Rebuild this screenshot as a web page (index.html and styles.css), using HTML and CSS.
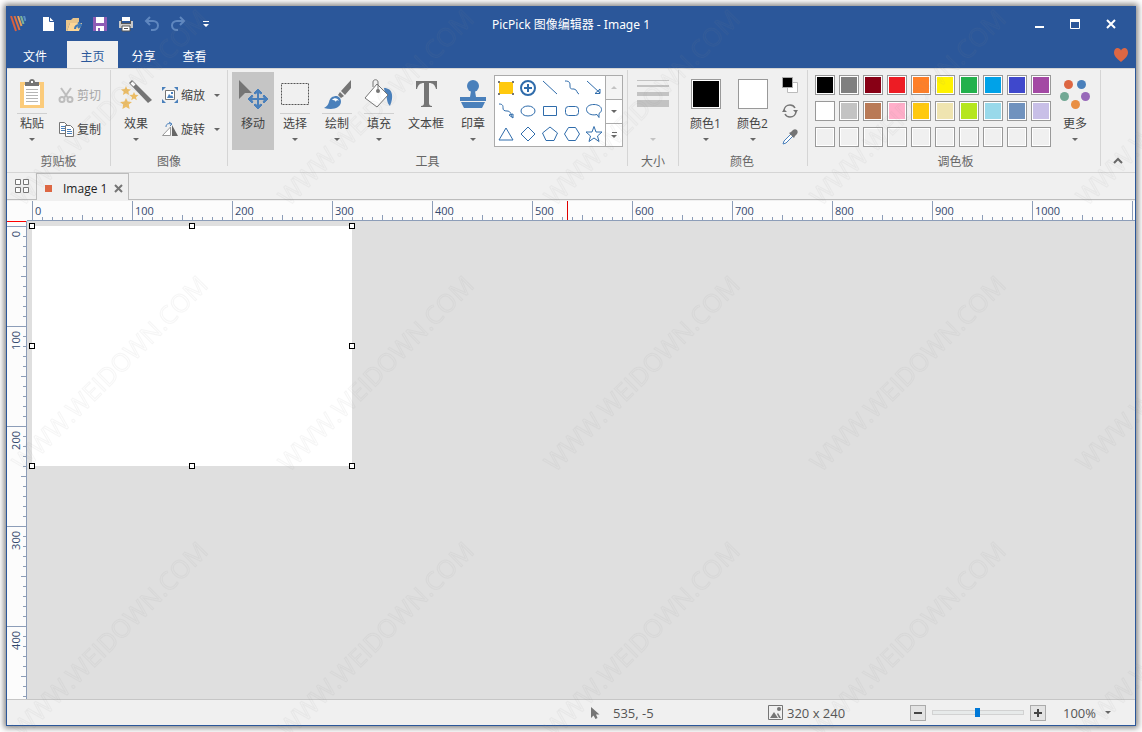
FILE: index.html
```html
<!DOCTYPE html>
<html lang="zh-CN">

<head>
    <meta charset="UTF-8" />
    <meta name="viewport" content="width=device-width, initial-scale=1.0" />
    <title>PicPick 图像编辑器 - Image 1</title>
    <link rel="stylesheet" href="styles.css">
</head>

<body>
    <div class="window">

        <!-- title bar -->
        <header class="title-bar">
            <div class="quick-access">
                <svg class="logo" width="16" height="16" viewBox="0 0 16 16" fill="none" stroke-width="2">
                    <path d="M1 0l5 15" stroke="#d9603f" />
                    <path d="M4.500 0l5 14" stroke="#e0703f" />
                    <path d="M8 0l3.500 10" stroke="#e8a05a" />
                    <path d="M11 0l2.500 8" stroke="#7bb39a" />
                    <path d="M14 0l1.500 5" stroke="#5b8fc4" />
                </svg>
                <button class="quick-btn" aria-label="新建">
                    <svg width="16" height="16" viewBox="0 0 16 16"><path d="M3 1h6.500L14 5.500V15H3z" fill="#fff" /><path d="M9.500 1v4.500H14" fill="none" stroke="#2b579a" /></svg>
                </button>
                <button class="quick-btn" aria-label="打开">
                    <svg width="16" height="16" viewBox="0 0 16 16"><path d="M0 4h5l2-2h6v5H4l-3 8H0z" fill="#e9c58b" /><path d="M4 7h12l-3 8H1z" fill="#fbd596" /><path d="M9 13c0-3 2-4 5-4M12 6.500l3 2.500-3 3" fill="none" stroke="#3d79b8" stroke-width="2" /></svg>
                </button>
                <button class="quick-btn" aria-label="保存">
                    <svg width="16" height="16" viewBox="0 0 16 16"><path d="M1 1h14v14H1z" fill="#8e5cb5" /><path d="M4 1h8v6H4zM4 10h8v5H4z" fill="#fff" /><path d="M6 12h2v3H6z" fill="#8e5cb5" /></svg>
                </button>
                <button class="quick-btn" aria-label="打印">
                    <svg width="16" height="16" viewBox="0 0 16 16"><path d="M4 1h8v4H4z" fill="#fff" /><path d="M1 5h2v2h10V5h2v7H1z" fill="#c9c9c9" /><path d="M3 4h1v3h8V4h1v4H3z" fill="#555" /><path d="M4 10h8v5H4z" fill="#fff" stroke="#555" /><path d="M6 12.500h4" stroke="#555" /></svg>
                </button>
                <button class="quick-btn" aria-label="撤消">
                    <svg width="16" height="16" viewBox="0 0 16 16" fill="none" stroke="#5f87bf" stroke-width="2"><path d="M6 1L2 5l4 4M2 5h7c3 0 5 2 5 4.500S12 14 9 14H7" /></svg>
                </button>
                <button class="quick-btn" aria-label="重做">
                    <svg width="16" height="16" viewBox="0 0 16 16" fill="none" stroke="#5f87bf" stroke-width="2"><path d="M10 1l4 4-4 4M14 5H7C4 5 2 7 2 9.500S4 14 7 14h1" /></svg>
                </button>
                <button class="quick-btn quick-more" aria-label="自定义快速访问工具栏">
                    <svg width="8" height="8" viewBox="0 0 8 8" fill="#fff"><path d="M1 1h6v1H1zM1 4h6L4 7z" /></svg>
                </button>
            </div>
            <h1 class="title">PicPick 图像编辑器 - Image 1</h1>
            <div class="window-controls">
                <button class="window-btn" aria-label="最小化">
                    <svg width="12" height="12" viewBox="0 0 12 12"><path d="M2 8h9v2H2z" fill="#fff" /></svg>
                </button>
                <button class="window-btn" aria-label="最大化">
                    <svg width="12" height="12" viewBox="0 0 12 12"><path d="M1.500 1.500h9v9h-9z" fill="none" stroke="#fff" /><path d="M1 1h10v3H1z" fill="#fff" /></svg>
                </button>
                <button class="window-btn" aria-label="关闭">
                    <svg width="12" height="12" viewBox="0 0 12 12"><path d="M2 2l8 8M10 2l-8 8" stroke="#fff" stroke-width="2" /></svg>
                </button>
            </div>
        </header>

        <!-- ribbon tabs -->
        <nav class="ribbon-tabs">
            <button class="ribbon-tab file-tab">文件</button>
            <button class="ribbon-tab active">主页</button>
            <button class="ribbon-tab">分享</button>
            <button class="ribbon-tab">查看</button>
            <button class="heart-btn" aria-label="捐助">
                <svg width="16" height="16" viewBox="0 0 16 16"><path d="M8 15C3 11 1 8.500 1 5.500 1 3 2.500 1 4.500 1 6 1 7.500 2 8 3.500 8.500 2 10 1 11.500 1 13.500 1 15 3 15 5.500c0 3-2 5.500-7 9.500z" fill="#dd6743" /></svg>
            </button>
        </nav>

        <!-- ribbon -->
        <section class="ribbon">
            <div class="group group-clipboard">
                <div class="group-body">
                    <button class="big-btn split">
                        <svg class="big-icon" width="32" height="32" viewBox="0 0 32 32"><path d="M4 3h24v26H4z" fill="#fbcb7b" /><path d="M8 6h16v20H8z" fill="#fff" /><path d="M9 7V3h4c0-4 6-4 6 0h4v4z" fill="#757575" /><path d="M15 2h2v2h-2z" fill="#fff" /><path d="M10 10.500h12M10 13.500h12M10 16.500h12M10 19.500h12M10 22.500h12" stroke="#b5b5b5" /></svg>
                        <span class="big-label">粘贴</span>
                        <span class="arrow"></span>
                    </button>
                    <div class="small-list">
                        <button class="small-btn disabled">
                            <svg width="16" height="16" viewBox="0 0 16 16" fill="none" stroke="#bdbdbd" stroke-width="2"><path d="M3 1l7 10M13 1L6 11" /><circle cx="4" cy="12.500" r="2.500" /><circle cx="12" cy="12.500" r="2.500" /></svg>
                            <span>剪切</span>
                        </button>
                        <button class="small-btn">
                            <svg width="16" height="16" viewBox="0 0 16 16"><path d="M1.500 1.500h5l3 3v8h-8z" fill="#fff" stroke="#757575" /><path d="M3 5.500h4M3 7.500h4M3 9.500h4" stroke="#4a80bb" /><path d="M7.500 4.500h5l3 3v8h-8z" fill="#fff" stroke="#757575" /><path d="M9 8.500h4M9 10.500h5M9 12.500h5" stroke="#4a80bb" /></svg>
                            <span>复制</span>
                        </button>
                    </div>
                </div>
                <div class="group-name">剪贴板</div>
            </div>

            <div class="group group-image">
                <div class="group-body">
                    <button class="big-btn">
                        <svg class="big-icon" width="32" height="32" viewBox="0 0 32 32"><path d="M9 4l3-3 20 20-4 3z" fill="#757575" /><path d="M10.500 4.500l2-2 3 3-2 2z" fill="#fff" /><path d="M6 7l1.300 3 3.700.5-2.700 2.200.8 3.300L6 14.200 2.900 16l.8-3.300L1 10.500l3.700-.5zM14 13l1.300 2.700 3.200.3-2.500 2.200.8 3-2.800-1.600-2.800 1.600.8-3-2.500-2.200 3.200-.3zM6 19l1.700 3.400 4.300.6-3.200 2.500.8 4.500L6 28l-3.600 2 .8-4.500L0 23l4.300-.6z" fill="#ecbd65" /></svg>
                        <span class="big-label">效果</span>
                        <span class="arrow"></span>
                    </button>
                    <div class="small-list">
                        <button class="small-btn">
                            <svg width="16" height="16" viewBox="0 0 16 16"><path d="M3.500 3.500h9v9h-9z" fill="#fff" stroke="#757575" /><path d="M5 11l2-4 2 2 1-1 1.500 3z" fill="#4a80bb" /><path d="M9 5h2v2H9z" fill="#4a80bb" /><path d="M0 0h4L0 4zM16 0v4l-4-4zM0 16v-4l4 4zM16 16h-4l4-4z" fill="#4a80bb" /></svg>
                            <span>缩放</span>
                            <span class="arrow"></span>
                        </button>
                        <button class="small-btn">
                            <svg width="16" height="16" viewBox="0 0 16 16"><path d="M8.500 6v8.500h-8z" fill="#fff" stroke="#999" /><path d="M10 4v11h6z" fill="#666" /><path d="M4 6c0-3 2-4 5-3M7 1l3 2-2 2" fill="none" stroke="#4a80bb" /></svg>
                            <span>旋转</span>
                            <span class="arrow"></span>
                        </button>
                    </div>
                </div>
                <div class="group-name">图像</div>
            </div>

            <div class="group group-tools">
                <div class="group-body">
                    <button class="big-btn selected">
                        <svg class="big-icon" width="32" height="32" viewBox="0 0 32 32"><path d="M2 1l13 13H8l-6 6z" fill="#757575" /><path d="M21 12v16M13 20h16" stroke="#4a80bb" stroke-width="2" /><path d="M21 10l4 4-1 1-3-2-3 2-1-1zM21 30l4-4-1-1-3 2-3-2-1 1zM11 20l4-4 1 1-2 3 2 3-1 1zM31 20l-4-4-1 1 2 3-2 3 1 1z" fill="#4a80bb" stroke="#4a80bb" /></svg>
                        <span class="big-label">移动</span>
                    </button>
                    <button class="big-btn split">
                        <svg class="big-icon" width="32" height="32" viewBox="0 0 32 32"><path d="M2.500 4.500h27v21h-27z" fill="none" stroke="#555" stroke-dasharray="2 1" /></svg>
                        <span class="big-label">选择</span>
                        <span class="arrow"></span>
                    </button>
                    <button class="big-btn split">
                        <svg class="big-icon" width="32" height="32" viewBox="0 0 32 32"><path d="M30 1v8l-6 7-4-4zM19 13l4 4-3 2-3-3z" fill="#757575" /><path d="M16 17c-5 0-7 2-8 6-1 3-2 4-5 6 8 2 16 1 17-6 0-3-1-5-4-6z" fill="#4a80bb" /><path d="M11 21c2-3 6-2 7 1-1-1-3-1-3 1-1-2-3-2-4-2z" fill="#fff" /></svg>
                        <span class="big-label">绘制</span>
                        <span class="arrow"></span>
                    </button>
                    <button class="big-btn split">
                        <svg class="big-icon" width="32" height="32" viewBox="0 0 32 32"><path d="M21 9c9 0 10 9 6 18-4-4-2-8-5-12z" fill="#4a80bb" /><path d="M14 5l11 11-11 12-12-9z" fill="#fff" stroke="#757575" /><path d="M10 8V3c0-3 5-3 5 0v9" fill="none" stroke="#757575" /><circle cx="15" cy="12" r="2" fill="#757575" /></svg>
                        <span class="big-label">填充</span>
                        <span class="arrow"></span>
                    </button>
                    <button class="big-btn wide">
                        <svg class="big-icon" width="32" height="32" viewBox="0 0 32 32"><path d="M6 2h21v8h-1c-1-4-3-6-7-6v20c0 2 1 3 3 3v1H11v-1c2 0 3-1 3-3V4c-4 0-6 2-7 6H6z" fill="#757575" /></svg>
                        <span class="big-label">文本框</span>
                    </button>
                    <button class="big-btn">
                        <svg class="big-icon" width="32" height="32" viewBox="0 0 32 32"><circle cx="16" cy="7" r="6" fill="#4a80bb" /><path d="M14 12h4l1 6h10v4H3v-4h10zM4 23h24l-3 6H7z" fill="#4a80bb" /></svg>
                        <span class="big-label">印章</span>
                        <span class="arrow"></span>
                    </button>

                    <div class="gallery">
                        <div class="shapes">
                            <button class="shape" aria-label="高亮"><svg viewBox="0 0 18 18"><path d="M2 3h14v12H2z" fill="#ffc90e" stroke="none" /><path d="M1 2h2v2H1zM15 2h2v2h-2zM1 14h2v2H1zM15 14h2v2h-2z" fill="#777" stroke="none" /></svg></button>
                            <button class="shape" aria-label="编号"><svg viewBox="0 0 18 18"><circle cx="9" cy="9" r="7" stroke-width="2" /><path d="M9 5v8M5 9h8" stroke-width="2" /></svg></button>
                            <button class="shape" aria-label="直线"><svg viewBox="0 0 18 18"><path d="M2 2l14 13" /></svg></button>
                            <button class="shape" aria-label="曲线"><svg viewBox="0 0 18 18"><path d="M2 2c5 0 5 2 5 5s1 3 4 3 3 5 5 5" /></svg></button>
                            <button class="shape" aria-label="箭头"><svg viewBox="0 0 18 18"><path d="M2 2l13 12M15 10v4.500h-5z" /></svg></button>
                            <button class="shape" aria-label="曲线箭头"><svg viewBox="0 0 18 18"><path d="M2 2c4 0 4 2 4 4s1 3 4 3 4 2 5 6M12 13l4 3v-4z" /></svg></button>
                            <button class="shape" aria-label="椭圆"><svg viewBox="0 0 18 18"><ellipse cx="9" cy="9" rx="7" ry="5" /></svg></button>
                            <button class="shape" aria-label="矩形"><svg viewBox="0 0 18 18"><path d="M2.500 4.500h13v9h-13z" /></svg></button>
                            <button class="shape" aria-label="圆角矩形"><svg viewBox="0 0 18 18"><rect x="2.500" y="4.500" width="13" height="9" rx="3" /></svg></button>
                            <button class="shape" aria-label="气泡"><svg viewBox="0 0 18 18"><path d="M12 12.500C6 14 1.500 11 1.500 7.500S5 2.500 9 2.500s7.500 2 7.500 5c0 2-1 3-2.500 4v4z" /></svg></button>
                            <button class="shape" aria-label="三角形"><svg viewBox="0 0 18 18"><path d="M9 3l7 12H2z" /></svg></button>
                            <button class="shape" aria-label="菱形"><svg viewBox="0 0 18 18"><path d="M9 2l7 7-7 7-7-7z" /></svg></button>
                            <button class="shape" aria-label="五边形"><svg viewBox="0 0 18 18"><path d="M9 2l7.500 6L13 15.500H5L1.500 8z" /></svg></button>
                            <button class="shape" aria-label="六边形"><svg viewBox="0 0 18 18"><path d="M5.500 2.500h7L16.500 9l-4 6.500h-7L1.500 9z" /></svg></button>
                            <button class="shape" aria-label="星形"><svg viewBox="0 0 18 18"><path d="M9 1.500l2 5.500h6l-4.500 4 1.500 5.500-5-3.500-5 3.500L5.500 11 1 7h6z" /></svg></button>
                        </div>
                        <div class="gallery-scroll">
                            <button aria-label="向上" class="disabled"><span class="arrow up"></span></button>
                            <button aria-label="向下"><span class="arrow"></span></button>
                            <button aria-label="更多形状"><span class="bar"></span><span class="arrow"></span></button>
                        </div>
                    </div>
                </div>
                <div class="group-name">工具</div>
            </div>

            <div class="group group-size">
                <div class="group-body">
                    <button class="big-btn disabled" aria-label="线条大小">
                        <svg class="big-icon" width="32" height="32" viewBox="0 0 32 32" fill="#c3c3c3"><path d="M0 1h32v1H0zM0 6h32v2H0zM0 13h32v4H0zM0 21h32v7H0z" /></svg>
                        <span class="big-label"></span>
                        <span class="arrow"></span>
                    </button>
                </div>
                <div class="group-name">大小</div>
            </div>

            <div class="group group-color">
                <div class="group-body">
                    <button class="big-btn color-btn">
                        <span class="color-box black"></span>
                        <span class="big-label">颜色1</span>
                        <span class="arrow"></span>
                    </button>
                    <button class="big-btn color-btn">
                        <span class="color-box"></span>
                        <span class="big-label">颜色2</span>
                        <span class="arrow"></span>
                    </button>
                    <div class="color-tools">
                        <button aria-label="默认颜色"><svg width="16" height="16" viewBox="0 0 16 16"><path d="M5.500 5.500h10v10h-10z" fill="#fff" stroke="#bbb" /><path d="M.5.500h10v10H.5z" fill="#000" stroke="#aaa" /></svg></button>
                        <button aria-label="交换颜色"><svg width="16" height="16" viewBox="0 0 16 16" fill="none" stroke="#757575" stroke-width="1.500"><path d="M2 8c0-4 3-6 6-6s4 1 5 3M14 8c0 4-3 6-6 6s-4-1-5-3" /><path d="M11 7h5l-2 3zM0 9h5L2 6z" fill="#757575" stroke="none" /></svg></button>
                        <button aria-label="取色器"><svg width="16" height="16" viewBox="0 0 16 16"><path d="M9 5l2 2-7 7-3 1 1-3z" fill="#fff" stroke="#4a80bb" /><path d="M7 4l5 5 1-2 2-2c2-3-1-6-4-4L9 3z" fill="#757575" /></svg></button>
                    </div>
                </div>
                <div class="group-name">颜色</div>
            </div>

            <div class="group group-palette">
                <div class="group-body">
                    <div class="palette" id="palette"></div>
                    <button class="big-btn">
                        <svg class="big-icon" width="32" height="32" viewBox="0 0 32 32"><circle cx="9.500" cy="5.500" r="4.500" fill="#dd6743" /><circle cx="22.500" cy="5.500" r="4.500" fill="#4a80bb" /><circle cx="5.500" cy="17.500" r="4.500" fill="#72a894" /><circle cx="26.500" cy="17.500" r="4.500" fill="#9869b9" /><circle cx="16.500" cy="25.500" r="4.500" fill="#e98f43" /></svg>
                        <span class="big-label">更多</span>
                        <span class="arrow"></span>
                    </button>
                </div>
                <div class="group-name">调色板</div>
            </div>

            <button class="collapse-btn" aria-label="折叠功能区">
                <svg width="10" height="10" viewBox="0 0 10 10" fill="none" stroke="#666" stroke-width="2"><path d="M1 7l4-4 4 4" /></svg>
            </button>
        </section>

        <!-- document tabs -->
        <nav class="doc-tabs">
            <button class="grid-btn" aria-label="缩略图">
                <svg width="14" height="14" viewBox="0 0 14 14" fill="#fff" stroke="#777"><path d="M.5.500h5v5h-5zM8.500.500h5v5h-5zM.5 8.500h5v5h-5zM8.500 8.500h5v5h-5z" /></svg>
            </button>
            <div class="doc-tab">
                <span class="doc-mark"></span>
                <span class="doc-name">Image 1</span>
                <button class="doc-close" aria-label="关闭 Image 1">
                    <svg width="9" height="9" viewBox="0 0 9 9" stroke="#757575" stroke-width="2"><path d="M1 1l7 7M8 1L1 8" /></svg>
                </button>
            </div>
        </nav>

        <!-- rulers and canvas -->
        <main class="editor">
            <div class="ruler-corner"></div>
            <div class="ruler-top" id="rulerTop">
                <span class="pointer-x"></span>
            </div>
            <div class="ruler-left" id="rulerLeft">
                <span class="pointer-y"></span>
            </div>
            <div class="workspace">
                <div class="canvas">
                    <span class="handle top left"></span>
                    <span class="handle top center"></span>
                    <span class="handle top right"></span>
                    <span class="handle middle left"></span>
                    <span class="handle middle right"></span>
                    <span class="handle bottom left"></span>
                    <span class="handle bottom center"></span>
                    <span class="handle bottom right"></span>
                </div>
            </div>
        </main>

        <!-- status bar -->
        <footer class="status-bar">
            <div class="status-item status-pos">
                <svg width="10" height="14" viewBox="0 0 10 14"><path d="M1 1v11l2.500-2.500L5.500 13l2-1L6 8.500h3.500z" fill="#757575" /></svg>
                <span>535, -5</span>
            </div>
            <div class="status-item status-size">
                <svg width="15" height="15" viewBox="0 0 15 15"><path d="M.5.500h14v14H.5z" fill="none" stroke="#757575" /><path d="M2 13l4-6 4 6zM9 9l1-1 3 5h-2z" fill="#757575" /><circle cx="11" cy="4" r="2" fill="#757575" /></svg>
                <span>320 x 240</span>
            </div>
            <div class="zoom">
                <button class="zoom-btn" aria-label="缩小"><svg width="8" height="8" viewBox="0 0 8 8"><path d="M0 3h8v2H0z" fill="#444" /></svg></button>
                <input type="range" class="zoom-range" min="0" max="100" value="49" aria-label="缩放比例" />
                <button class="zoom-btn" aria-label="放大"><svg width="8" height="8" viewBox="0 0 8 8"><path d="M0 3h3V0h2v3h3v2H5v3H3V5H0z" fill="#444" /></svg></button>
            </div>
            <label class="zoom-level">
                <select aria-label="缩放级别">
                    <option>100%</option>
                </select>
                <span class="arrow"></span>
            </label>
        </footer>
    </div>

    <svg class="watermark" aria-hidden="true">
        <defs>
            <pattern id="mark" width="266" height="266" patternUnits="userSpaceOnUse">
                <text transform="translate(23 207) rotate(-45)">WWW.WEIDOWN.COM</text>
            </pattern>
        </defs>
        <rect width="100%" height="100%" fill="url(#mark)" />
    </svg>

    <script>
        const colors = [
            '#000000', '#7f7f7f', '#880015', '#ed1c24', '#ff7f27', '#fff200', '#22b14c', '#00a2e8', '#3f48cc', '#a349a4',
            '#ffffff', '#c3c3c3', '#b97a57', '#ffaec9', '#ffc90e', '#efe4b0', '#b5e61d', '#99d9ea', '#7092be', '#c8bfe7',
            '', '', '', '', '', '', '', '', '', ''
        ];

        const palette = document.getElementById('palette');
        colors.forEach((color) => {
            const swatch = document.createElement('button');
            swatch.className = 'swatch';
            swatch.setAttribute('aria-label', color || '空');
            if (color) {
                swatch.style.backgroundColor = color;
            }
            palette.appendChild(swatch);
        });

        function buildRuler(id, length) {
            const ruler = document.getElementById(id);
            for (let value = 0; value < length; value += 100) {
                const step = document.createElement('span');
                step.className = 'ruler-step';
                // no number when it would run over the end
                if (length - value > 30) {
                    const num = document.createElement('span');
                    num.className = 'ruler-num';
                    num.textContent = value;
                    step.appendChild(num);
                }
                ruler.appendChild(step);
            }
        }

        buildRuler('rulerTop', document.getElementById('rulerTop').clientWidth - 5);
        buildRuler('rulerLeft', document.getElementById('rulerLeft').clientHeight - 5);
    </script>
</body>

</html>
```

FILE: styles.css
```css
* {
    box-sizing: border-box;
}

body {
    margin: 0;
    padding: 6px;
    height: 100vh;
    background: #fff;
    font-family: "Open Sans", "Noto Sans CJK SC", sans-serif;
    font-size: 12px;
    color: #444;
    overflow: hidden;
}

button {
    display: flex;
    align-items: center;
    justify-content: center;
    margin: 0;
    padding: 0;
    border: none;
    background: none;
    font: inherit;
    color: inherit;
}

svg {
    flex-shrink: 0;
}

.window {
    display: flex;
    flex-direction: column;
    height: 100%;
    border: 1px solid #2b579a;
    background: #f0f0f0;
    box-shadow: 0 0 6px 2px rgba(0, 0, 0, 0.5);
}

.arrow {
    width: 0;
    height: 0;
    border: 3px solid transparent;
    border-top-color: #666;
    border-bottom: none;
}

.arrow.up {
    border-top: none;
    border-bottom: 3px solid #666;
}

.disabled {
    color: #a6a6a6;
}

.disabled .arrow {
    border-top-color: #c3c3c3;
    border-bottom-color: #c3c3c3;
}

/* title bar */
.title-bar {
    display: grid;
    grid-template-columns: 1fr auto 1fr;
    align-items: center;
    flex: 0 0 34px;
    background: #2b579a;
    color: #fff;
}

.quick-access {
    display: flex;
    align-items: center;
}

.logo {
    margin: 0 9px 0 3px;
}

.quick-btn {
    width: 26px;
    height: 26px;
}

.quick-more {
    width: 30px;
}

.title {
    margin: 0;
    font-family: "Noto Sans", "Noto Sans CJK SC", sans-serif;
    font-size: 12px;
    font-weight: normal;
}

.window-controls {
    display: flex;
    justify-content: flex-end;
    padding-right: 6px;
}

.window-btn {
    width: 36px;
    height: 26px;
}

/* ribbon tabs */
.ribbon-tabs {
    display: flex;
    flex: 0 0 27px;
    background: #2b579a;
}

.ribbon-tab {
    width: 51px;
    padding-top: 3px;
    color: #fff;
}

.file-tab {
    width: 56px;
    margin-right: 4px;
}

.ribbon-tab.active {
    margin-bottom: -1px;
    padding-bottom: 1px;
    background: #f0f0f0;
    color: #2b579a;
}

.heart-btn {
    margin-left: auto;
    padding-right: 6px;
}

/* ribbon */
.ribbon {
    display: flex;
    flex: 0 0 105px;
    border-top: 1px solid #d5d5d5;
    border-bottom: 1px solid #d5d5d5;
}

.group {
    display: flex;
    flex-direction: column;
    padding: 3px 5px 0 4px;
    background: linear-gradient(#d5d5d5, #d5d5d5) right 1px / 1px 96px no-repeat;
}

.group-body {
    display: flex;
    height: 78px;
}

.group-name {
    padding-top: 2px;
    line-height: 20px;
    text-align: center;
    color: #666;
}

.group-clipboard {
    width: 104px;
}

.group-image {
    width: 117px;
}

.group-size {
    width: 51px;
}

.group-color {
    padding-left: 3px;
    padding-right: 6px;
}

.group-palette {
    padding-left: 7px;
}

.big-btn {
    flex-direction: column;
    justify-content: flex-start;
    width: 42px;
    padding-top: 7px;
}

.big-btn.wide {
    width: 52px;
}

.big-btn.selected {
    background: #c5c5c5;
}

.big-label {
    width: 30px;
    height: 23px;
    margin-top: 2px;
    border-top: 1px solid transparent;
    line-height: 20px;
    text-align: center;
    white-space: nowrap;
}

.wide .big-label {
    width: 100%;
}

.split .big-label {
    border-top-color: #d0d0d0;
}

.big-btn .arrow {
    margin-top: 2px;
}

.small-list {
    display: flex;
    flex-direction: column;
    gap: 10px;
    padding: 11px 0 0 1px;
}

.small-btn {
    gap: 3px;
    height: 24px;
    padding-left: 4px;
}

.small-btn .arrow {
    margin-left: 6px;
}

.gallery {
    display: flex;
    width: 129px;
    height: 72px;
    margin-top: 3px;
    border: 1px solid #ababab;
    background: #fff;
}

.shapes {
    display: grid;
    grid-template-columns: repeat(5, 22px);
    grid-template-rows: repeat(3, 1fr);
}

.shape svg {
    width: 18px;
    height: 18px;
    fill: none;
    stroke: #2f6cab;
}

.gallery-scroll {
    display: grid;
    flex: 1;
    grid-template-rows: repeat(3, 1fr);
    border-left: 1px solid #ababab;
}

.gallery-scroll button {
    flex-direction: column;
    gap: 2px;
}

.gallery-scroll button.disabled {
    background: #f4f4f4;
}

.gallery-scroll button + button {
    border-top: 1px solid #ababab;
}

.bar {
    width: 5px;
    height: 1px;
    background: #666;
}

.color-btn {
    width: 47px;
}

.color-box {
    width: 30px;
    height: 30px;
    margin-bottom: 2px;
    border: 1px solid #999;
    background: #fff;
}

.color-box.black {
    background: #000;
    box-shadow: inset 0 0 0 1px #fff;
}

.color-btn .big-label {
    width: 100%;
}

.color-tools {
    display: flex;
    flex-direction: column;
    gap: 10px;
    padding: 5px 4px 0 6px;
}

.palette {
    display: grid;
    grid-template-columns: repeat(10, 20px);
    gap: 6px 4px;
    align-content: start;
    padding: 3px 3px 0 0;
}

.swatch {
    height: 20px;
    border: 1px solid #999;
    box-shadow: inset 0 0 0 1px #fff;
}

.collapse-btn {
    align-self: flex-end;
    width: 22px;
    height: 22px;
    margin: 0 6px 0 auto;
}

/* document tabs */
.doc-tabs {
    display: flex;
    flex: 0 0 27px;
    margin-bottom: 1px;
    border-bottom: 1px solid #bcbcbc;
}

.grid-btn {
    width: 29px;
}

.doc-tab {
    display: flex;
    align-items: center;
    margin-bottom: -1px;
    padding: 2px 5px 0 8px;
    border: 1px solid #bcbcbc;
    border-bottom: none;
    background: #f0f0f0;
    color: #222;
}

.doc-mark {
    width: 7px;
    height: 7px;
    margin-right: 11px;
    background: #dd6743;
}

.doc-close {
    margin-left: 7px;
}

/* editor */
.editor {
    display: grid;
    grid-template-columns: 20px 1fr;
    grid-template-rows: 20px 1fr;
    flex: 1;
    min-height: 0;
    background: #dfdfdf;
}

.ruler-corner {
    background: #fcfcfc;
}

.ruler-top,
.ruler-left {
    position: relative;
    display: flex;
    min-width: 0;
    min-height: 0;
    overflow: hidden;
    background: #fcfcfc;
    font-size: 11px;
    color: #34496e;
}

.ruler-top {
    padding-left: 5px;
    border-bottom: 1px solid #8c9db8;
}

.ruler-left {
    flex-direction: column;
    padding-top: 5px;
    border-right: 1px solid #8c9db8;
}

.ruler-step {
    flex: 0 0 100px;
    background-repeat: no-repeat;
}

.ruler-top .ruler-step {
    padding-left: 3px;
    line-height: 20px;
    background-image:
        linear-gradient(#8c9db8, #8c9db8),
        linear-gradient(#8c9db8, #8c9db8),
        repeating-linear-gradient(90deg, #8c9db8 0 1px, transparent 1px 10px);
    background-size: 1px 100%, 1px 5px, 100% 3px;
    background-position: 0 0, 50px 100%, 0 100%;
}

.ruler-left .ruler-step {
    padding: 5px 0 0 1px;
    line-height: 16px;
    background-image:
        linear-gradient(#8c9db8, #8c9db8),
        linear-gradient(#8c9db8, #8c9db8),
        repeating-linear-gradient(#8c9db8 0 1px, transparent 1px 10px);
    background-size: 100% 1px, 5px 1px, 3px 100%;
    background-position: 0 0, 100% 50px, 100% 0;
}

.ruler-left .ruler-num {
    display: block;
    width: 16px;
    writing-mode: vertical-rl;
    transform: rotate(180deg);
}

.pointer-x {
    position: absolute;
    top: 0;
    left: 540px;
    width: 1px;
    height: 100%;
    background: #e00000;
}

.pointer-y {
    position: absolute;
    top: 0;
    left: 0;
    width: 100%;
    height: 1px;
    background: #f00;
}

.workspace {
    padding: 5px;
    overflow: hidden;
}

.canvas {
    position: relative;
    width: 320px;
    height: 240px;
    background: #fff;
}

.handle {
    position: absolute;
    width: 6px;
    height: 6px;
    border: 1px solid #000;
    background: #fff;
}

.handle.top {
    top: -3px;
}

.handle.middle {
    top: calc(50% - 3px);
}

.handle.bottom {
    bottom: -3px;
}

.handle.left {
    left: -3px;
}

.handle.center {
    left: calc(50% - 3px);
}

.handle.right {
    right: -3px;
}

/* status bar */
.status-bar {
    display: flex;
    align-items: center;
    justify-content: flex-end;
    flex: 0 0 26px;
    padding-right: 24px;
    border-top: 1px solid #c6c6c6;
    font-size: 13px;
    color: #555;
}

.status-item {
    display: flex;
    align-items: center;
}

.status-pos {
    gap: 13px;
    width: 178px;
}

.status-size {
    gap: 4px;
    width: 142px;
}

.zoom {
    display: flex;
    align-items: center;
    gap: 6px;
}

.zoom-btn {
    width: 16px;
    height: 16px;
    border: 1px solid #ababab;
    background: #e3e3e3;
}

.zoom-range {
    width: 92px;
    height: 10px;
    margin: 0;
    appearance: none;
    background: none;
}

.zoom-range::-webkit-slider-runnable-track {
    height: 5px;
    border: 1px solid #d2d2d2;
    background: #e7eaea;
}

.zoom-range::-webkit-slider-thumb {
    appearance: none;
    width: 5px;
    height: 9px;
    margin-top: -3px;
    background: #0078d7;
}

.zoom-level {
    display: flex;
    align-items: center;
    gap: 8px;
    padding-left: 17px;
}

.zoom-level select {
    appearance: none;
    margin: 0;
    padding: 0;
    border: none;
    background: none;
    font: inherit;
    color: inherit;
}

/* watermark */
.watermark {
    position: fixed;
    inset: 0;
    width: 100%;
    height: 100%;
    pointer-events: none;
}

.watermark text {
    font-family: "Open Sans", sans-serif;
    font-size: 25px;
    fill: rgba(128, 128, 128, 0.01);
    stroke: rgba(128, 128, 128, 0.07);
}
```
